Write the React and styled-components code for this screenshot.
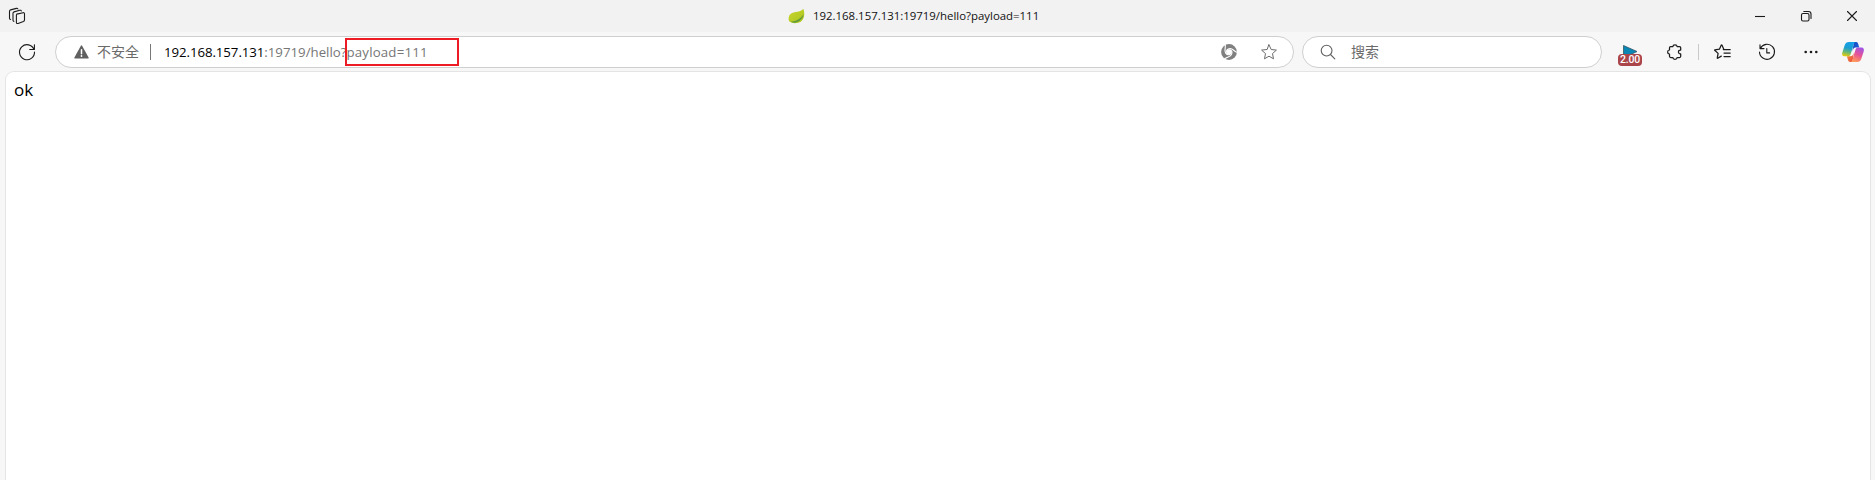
import React from 'react';
import styled, { createGlobalStyle } from 'styled-components';

const GlobalStyle = createGlobalStyle`
  * { box-sizing: border-box; }
  body {
    margin: 0;
    background: #f7f7f7;
    font-family: "Open Sans", "Noto Sans", "Noto Sans CJK SC", sans-serif;
    overflow: hidden;
  }
  svg { display: block; flex: none; overflow: visible; }
`;

const Browser = styled.div`
  display: flex;
  flex-direction: column;
  width: 100%;
  height: 100vh;
  background: #f7f7f7;
`;

const TitleBar = styled.header`
  display: grid;
  grid-template-columns: 1fr auto 1fr;
  align-items: center;
  flex: none;
  height: 32px;
  padding: 0 13px 0 9px;
  background: #f2f2f2;
`;

const PageTitle = styled.div`
  display: flex;
  align-items: center;
  gap: 7px;
  margin-right: 44px;
  font-size: 11.42px;
  line-height: 16px;
  color: #111;
  white-space: nowrap;
`;

const TitleText = styled.span`
  width: 226px;
`;

const WindowControls = styled.div`
  display: flex;
  justify-content: flex-end;
  gap: 26px;
`;

const Toolbar = styled.nav`
  display: flex;
  align-items: center;
  flex: none;
  height: 39px;
  padding: 1px 11px 0 19px;
`;

const Field = styled.div`
  display: flex;
  align-items: center;
  height: 32px;
  margin-left: ${(p) => p.$gap}px;
  flex: ${(p) => (p.$width ? `0 0 ${p.$width}px` : '1 1 0')};
  padding: ${(p) => p.$pad};
  border: 1px solid #cfcfcf;
  border-radius: 16px;
  background: #fff;
`;

const Label = styled.span`
  margin: -2px 0 0 ${(p) => p.$gap}px;
  font-family: "Noto Sans CJK SC", sans-serif;
  font-size: 14px;
  line-height: 20px;
  color: #6a6a6a;
`;

const Divider = styled.span`
  flex: none;
  width: 1px;
  height: 16px;
  margin: ${(p) => p.$margin};
  background: ${(p) => p.$color};
`;

const Url = styled.div`
  position: relative;
  flex: 1;
  font-size: 13.25px;
  line-height: 20px;
  color: #767676;
  white-space: nowrap;
`;

const Host = styled.span`
  color: #000;
  letter-spacing: -0.07px;
`;

const Query = styled.span`
  letter-spacing: 0.18px;
`;

const Highlight = styled.span`
  position: absolute;
  left: 181px;
  top: -4px;
  width: 114px;
  height: 28px;
  border: 2px solid #ed1c24;
`;

const FieldActions = styled.div`
  display: flex;
  align-items: center;
  gap: 24px;
`;

const Extension = styled.div`
  position: relative;
  width: 24px;
  height: 24px;
  margin-left: 16px;
`;

const Badge = styled.span`
  position: absolute;
  left: 0;
  top: 14px;
  width: 24px;
  height: 12px;
  border-radius: 4px;
  background: #aa4549;
  color: #fff;
  font-family: Roboto, sans-serif;
  font-size: 10.5px;
  font-weight: 500;
  line-height: 12px;
  letter-spacing: -0.2px;
  text-align: center;
`;

const Tools = styled.div`
  display: flex;
  align-items: center;
`;

const Tool = styled.span`
  margin-left: ${(p) => p.$gap || 0}px;
`;

const Page = styled.main`
  flex: 1;
  margin: 0 4px 0 5px;
  padding: 7px 8px;
  border: 1px solid #e4e4e4;
  border-bottom: 0;
  border-radius: 9px 9px 0 0;
  background: #fff;
  color: #000;
  font-size: 17px;
  line-height: 22px;
`;

function Line({ size = 16, color = '#1b1b1b', width = 1.1, children }) {
  return (
    <svg width={size} height={size} viewBox={`0 0 ${size} ${size}`} fill="none"
      stroke={color} strokeWidth={width} strokeLinecap="round" strokeLinejoin="round">
      {children}
    </svg>
  );
}

const WorkspacesIcon = () => (
  <Line size={16}>
    <path d="M7.8 6.1 14 4.7c.9-.2 1.5.3 1.5 1.1v6.1c0 .8-.4 1.2-1.1 1.5l-5.3 2c-1 .4-1.7 0-1.7-.9V7.3c0-.7.3-1 .4-1.2Z" />
    <path d="M4.9 13.4c-.6-.1-.9-.5-.9-1.1V5.3c0-.8.4-1.2 1.1-1.4l5.7-1.6c.8-.2 1.4 0 1.5.7" />
    <path d="M1.6 11.5c-.7-.1-1.1-.5-1.1-1.2V3.4c0-.8.4-1.3 1.1-1.5L7.4.4c.8-.2 1.4 0 1.5.6" />
  </Line>
);

const LeafIcon = () => (
  <svg width="18" height="16" viewBox="0 0 18 16">
    <defs>
      <linearGradient id="leaf" x1="0" y1="0" x2="1" y2="1">
        <stop offset="0" stopColor="#cbd52c" /><stop offset="1" stopColor="#a8c51e" />
      </linearGradient>
    </defs>
    <path d="M15.300.7C17 5 17 12.800 10.500 14.600 7.500 15.500 4 15.400 1.800 13.800 0 12.300.3 7.900 2.600 5.900 6.100 3 12.500 4.700 15.300.7Z" fill="url(#leaf)" />
    <path d="M2.300 13.700C8 13.500 13 10.600 15.500 6.200 15 12 9.500 17 2.300 13.700Z" fill="#639b3c" />
    <path d="M7 14.800c3.500-.7 6.500-3 8.500-6.400-.8 4-4 6.800-8.500 6.400Z" fill="#b4cb25" />
  </svg>
);

const RefreshIcon = () => (
  <Line>
    <path d="M15 5.500A7.500 7.500 0 1 0 15.500 8M15.400.8v4.700h-4.700" />
  </Line>
);

const WarningIcon = () => (
  <svg width="15" height="14" viewBox="0 0 15 14">
    <path d="M6.900.8q.6-1 1.200 0l6.500 11.800q.4.900-.5.900H.9q-.9 0-.5-.9Z" fill="#606060" />
    <path d="M7.500 4.800v4" stroke="#fff" strokeWidth="1.500" strokeLinecap="round" />
    <circle cx="7.500" cy="11" r=".9" fill="#fff" />
  </svg>
);

const groove = 'M5.800 8.200C5.200 6 6.500 4.800 9 4.600 12 4.400 12.600 7.200 16.600 8.600';

const SwirlIcon = () => (
  <svg width="16" height="16" viewBox="0 0 16 16">
    <circle cx="8" cy="8" r="7.900" fill="#808080" />
    <circle cx="8" cy="8" r="2.800" fill="#fff" />
    <g fill="none" stroke="#fff" strokeWidth="1.100">
      <path d={groove} />
      <path d={groove} transform="rotate(120 8 8)" />
      <path d={groove} transform="rotate(240 8 8)" />
    </g>
  </svg>
);

const StarIcon = () => (
  <Line color="#6c6c6c" width={1}>
    <path d="m8 .8 2.200 4.700 5.200.6-3.900 3.500 1 5.200L8 12.200l-4.500 2.600 1-5.200L.6 6.100l5.200-.6Z" />
  </Line>
);

const SearchIcon = () => (
  <Line color="#606060"><circle cx="6.600" cy="6.600" r="5.400" /><path d="m10.500 10.500 4.300 4.300" /></Line>
);

const PuzzleIcon = () => (
  <Line width={1.25}>
    <path d="M3.700 2.500h2.200C6 .2 9.900.2 10.100 2.500h2.400q1.200 0 1.200 1.200v2.400c-3-.5-3 4.200 0 3.700v2.500q0 1.200-1.200 1.200h-2.400c-.2 2.400-4.100 2.400-4.200 0H3.700q-1.200 0-1.200-1.200V10C0 9.800 0 6.100 2.500 6V3.700q0-1.200 1.200-1.200Z" />
  </Line>
);

const FavoritesIcon = () => (
  <Line size={17} width={1.25}>
    <path d="m7.300 12.100-3.600 2.100q-.5.200-.4-.3l.8-4.500L.7 6.300q-.3-.4.200-.5l4.500-.6L7.300 1.100q.3-.5.600 0l1.900 4.100M9.300 5.500h6.900M10 9h6.200M10 12.500h6.200" />
  </Line>
);

const HistoryIcon = () => (
  <Line>
    <path d="M1.300 4.400A7.500 7.500 0 1 1 .5 8M1 .8v3.800h4M7.800 4.500v4.400h2.800" />
  </Line>
);

const MoreIcon = () => (
  <svg width="14" height="4" viewBox="0 0 14 4" fill="#1b1b1b">
    <circle cx="1.700" cy="2" r="1.300" /><circle cx="7" cy="2" r="1.300" /><circle cx="12.300" cy="2" r="1.300" />
  </svg>
);

const CopilotIcon = () => (
  <svg width="22" height="20" viewBox="0 0 22 20">
    <defs>
      <linearGradient id="cpCool" x1=".4" y1="0" x2=".2" y2="1">
        <stop offset="0" stopColor="#159fe8" /><stop offset=".4" stopColor="#1b9ed0" />
        <stop offset=".68" stopColor="#66b879" /><stop offset="1" stopColor="#f0cc00" />
      </linearGradient>
      <linearGradient id="cpWarm" x1=".8" y1="0" x2=".4" y2="1">
        <stop offset="0" stopColor="#9c55e8" /><stop offset=".5" stopColor="#e75396" />
        <stop offset="1" stopColor="#ff9a5a" />
      </linearGradient>
      <linearGradient id="cpBlue" x1="0" y1="0" x2="1" y2="1">
        <stop offset="0" stopColor="#1648b8" /><stop offset="1" stopColor="#2064e5" />
      </linearGradient>
      <linearGradient id="cpRed" x1="0" y1="0" x2="1" y2="1">
        <stop offset="0" stopColor="#f59a32" /><stop offset="1" stopColor="#e94446" />
      </linearGradient>
    </defs>
    <path d="M12 0h2.200c1.200 0 1.700.9 2 2l1 3.600h-3c-2.700 0-3.200 2-4 4.500Z" fill="url(#cpBlue)" />
    <path d="M10.500 20H8.300c-1.400 0-1.900-.8-2.300-2l-1.100-3.700h3.200c2.600 0 3.100-1.800 3.800-4.400Z" fill="url(#cpRed)" />
    <path d="M6.900 0h6.800c-1.200.3-1.700 1.300-2 2.400l-2.900 9.400c-.6 1.900-1.300 2.500-3.200 2.500H2.500C.3 14.300-.3 12.500.3 10.500L2.800 3C3.500 1 4.700 0 6.900 0Z" fill="url(#cpCool)" />
    <path d="M15.100 20H8.300c1.400-.2 1.800-1.200 2.200-2.500l2.800-9.300c.6-1.900 1.300-2.600 3.200-2.600h3c2.200 0 2.800 1.800 2.200 3.800L19.200 17c-.6 2-1.900 3-4.100 3Z" fill="url(#cpWarm)" />
  </svg>
);

export default function App() {
  return (
    <Browser>
      <GlobalStyle />
      <TitleBar>
        <WorkspacesIcon />
        <PageTitle>
          <LeafIcon />
          <TitleText>192.168.157.131:19719/hello?payload=111</TitleText>
        </PageTitle>
        <WindowControls>
          <Line size={20}><path d="M5 10.500h10" strokeLinecap="butt" /></Line>
          <Line size={20}>
            <rect x="5.500" y="7.500" width="7.500" height="7.500" rx="1.500" />
            <path d="M7.800 5.500h4.700q2.500 0 2.500 2.500v4.500" />
          </Line>
          <Line size={20}><path d="m5.500 5.500 9 9m0-9-9 9" /></Line>
        </WindowControls>
      </TitleBar>
      <Toolbar>
        <RefreshIcon />
        <Field $gap={20} $pad="0 16px 0 18px">
          <WarningIcon />
          <Label $gap={8}>不安全</Label>
          <Divider $margin="0 13px 0 11px" $color="#777" />
          <Url>
            <Host>192.168.157.131</Host>:19719/hello?<Query>payload=111</Query>
            <Highlight />
          </Url>
          <FieldActions><SwirlIcon /><StarIcon /></FieldActions>
        </Field>
        <Field $gap={8} $width={300} $pad="0 17px">
          <SearchIcon />
          <Label $gap={15}>搜索</Label>
        </Field>
        <Extension>
          <svg width="24" height="24" viewBox="0 0 24 24">
            <path d="M5.500 5.500 19 11.500 5.500 18Z" fill="#0b87b5" stroke="#315765" strokeWidth=".8" />
          </svg>
          <Badge>2.00</Badge>
        </Extension>
        <Tool $gap={25}><PuzzleIcon /></Tool>
        <Divider $margin="0 15px 0 15px" $color="#c9c9c9" />
        <Tools>
          <Tool><FavoritesIcon /></Tool>
          <Tool $gap={28}><HistoryIcon /></Tool>
          <Tool $gap={29}><MoreIcon /></Tool>
          <Tool $gap={24}><CopilotIcon /></Tool>
        </Tools>
      </Toolbar>
      <Page>ok</Page>
    </Browser>
  );
}
